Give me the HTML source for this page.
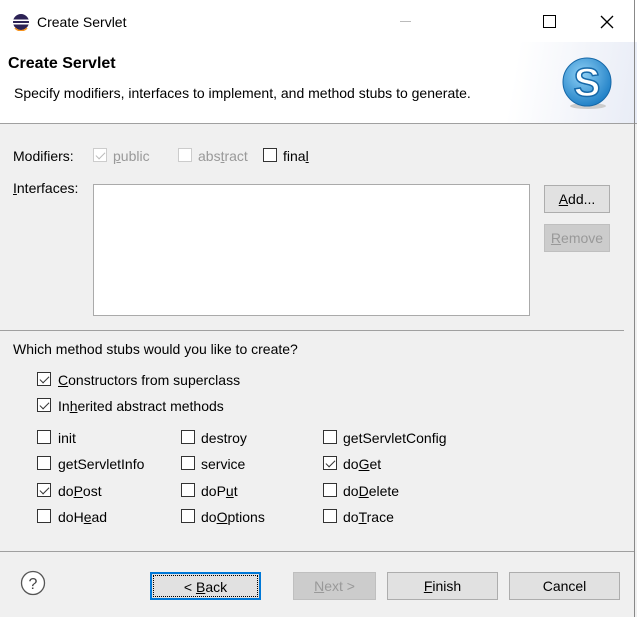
<!DOCTYPE html>
<html><head><style>
*{box-sizing:border-box}
body{margin:0;width:637px;height:617px;overflow:hidden;background:#f0f0f0;font-family:"Liberation Sans",sans-serif;font-size:14px;color:#000;position:relative}
.a{position:absolute;white-space:nowrap}
.cb{position:absolute;width:14px;height:14px;border:1px solid #333;background:#fff}
.cb.k::after{content:"";position:absolute;left:4px;top:1px;width:4px;height:8px;border:solid #333;border-width:0 1.3px 1.3px 0;transform:rotate(45deg)}
.dis{border-color:#ccc}
.dis.k::after{border-color:#bbb}
.btn{position:absolute;height:28px;border:1px solid #adadad;background:#e1e1e1;text-align:center;line-height:26px}
u{text-decoration:underline}
</style></head><body>
<div class="a" style="left:0;top:0;width:637px;height:123px;background:linear-gradient(100deg,#fff 80%,#e8ecf6 100%)"></div>
<div class="a" style="left:0;top:0;width:637px;height:42px;background:#fff"></div>
<div class="a" style="left:0;top:123px;width:637px;height:1px;background:#a0a0a0"></div>
<div class="a" style="left:634px;top:0;width:1px;height:617px;background:#888"></div>
<svg class="a" style="left:12px;top:13px" width="18" height="18"><circle cx="9" cy="9" r="8" fill="#2c2255"/><rect x="1" y="6.5" width="16" height="1.5" fill="#fff"/><rect x="1" y="10" width="16" height="1.5" fill="#fff"/><path d="M3 15 A8 8 0 0 0 15 15" stroke="#f7941e" stroke-width="1.5" fill="none"/></svg>
<div class="a" style="left:37px;top:14px;font-size:14px">Create Servlet</div>
<div class="a" style="left:400px;top:21px;width:11px;height:1px;background:#bbb"></div>
<div class="a" style="left:543px;top:15px;width:13px;height:13px;border:1.3px solid #000"></div>
<svg class="a" style="left:600px;top:15px" width="14" height="14"><path d="M1 1L13 13M13 1L1 13" stroke="#000" stroke-width="1.3"/></svg>
<div class="a" style="left:8px;top:55px;font-size:16px;font-weight:bold">Create Servlet</div>
<div class="a" style="left:14px;top:85px">Specify modifiers, interfaces to implement, and method stubs to generate.</div>
<svg class="a" style="left:560px;top:56px" width="56" height="56"><defs><radialGradient id="g" cx="40%" cy="35%" r="70%"><stop offset="0" stop-color="#8fd0f5"/><stop offset="1" stop-color="#1a7cc4"/></radialGradient></defs><ellipse cx="28" cy="50" rx="18" ry="3" fill="#ccc"/><circle cx="27" cy="26" r="24" fill="url(#g)" stroke="#1668a8"/><text x="27" y="40" text-anchor="middle" font-family="Liberation Sans" font-weight="bold" font-size="40" fill="#fff" stroke="#1668a8" stroke-width="1.5">S</text></svg>

<div class="a" style="left:13px;top:148px">Modifiers:</div>
<div class="cb dis k" style="left:93px;top:148px"></div><div class="a" style="left:113px;top:148px;color:#999"><u>p</u>ublic</div>
<div class="cb dis" style="left:178px;top:148px"></div><div class="a" style="left:198px;top:148px;color:#999">abs<u>t</u>ract</div>
<div class="cb" style="left:263px;top:148px"></div><div class="a" style="left:283px;top:148px">fina<u>l</u></div>
<div class="a" style="left:13px;top:180px"><u>I</u>nterfaces:</div>
<div class="a" style="left:93px;top:184px;width:437px;height:132px;background:#fff;border:1px solid #aaa"></div>
<div class="btn" style="left:544px;top:185px;width:66px"><u>A</u>dd...</div>
<div class="btn" style="left:544px;top:224px;width:66px;color:#999;background:#ccc;border-color:#bfbfbf"><u>R</u>emove</div>
<div class="a" style="left:0;top:330px;width:624px;height:1px;background:#a0a0a0"></div>
<div class="a" style="left:13px;top:341px">Which method stubs would you like to create?</div>
<div class="cb k" style="left:37px;top:372px"></div><div class="a" style="left:58px;top:372px"><u>C</u>onstructors from superclass</div>
<div class="cb k" style="left:37px;top:398px"></div><div class="a" style="left:58px;top:398px">In<u>h</u>erited abstract methods</div>

<div class="cb" style="left:37px;top:430px"></div><div class="a" style="left:58px;top:430px">init</div>
<div class="cb" style="left:181px;top:430px"></div><div class="a" style="left:201px;top:430px">destroy</div>
<div class="cb" style="left:323px;top:430px"></div><div class="a" style="left:343px;top:430px">getServletConfig</div>
<div class="cb" style="left:37px;top:456px"></div><div class="a" style="left:58px;top:456px">getServletInfo</div>
<div class="cb" style="left:181px;top:456px"></div><div class="a" style="left:201px;top:456px">service</div>
<div class="cb k" style="left:323px;top:456px"></div><div class="a" style="left:343px;top:456px">do<u>G</u>et</div>
<div class="cb k" style="left:37px;top:483px"></div><div class="a" style="left:58px;top:483px">do<u>P</u>ost</div>
<div class="cb" style="left:181px;top:483px"></div><div class="a" style="left:201px;top:483px">doP<u>u</u>t</div>
<div class="cb" style="left:323px;top:483px"></div><div class="a" style="left:343px;top:483px">do<u>D</u>elete</div>
<div class="cb" style="left:37px;top:509px"></div><div class="a" style="left:58px;top:509px">doH<u>e</u>ad</div>
<div class="cb" style="left:181px;top:509px"></div><div class="a" style="left:201px;top:509px">do<u>O</u>ptions</div>
<div class="cb" style="left:323px;top:509px"></div><div class="a" style="left:343px;top:509px">do<u>T</u>race</div>

<div class="a" style="left:0;top:551px;width:634px;height:1px;background:#a0a0a0"></div>
<svg class="a" style="left:20px;top:570px" width="26" height="26"><circle cx="13" cy="13" r="11.5" fill="#fff" stroke="#555" stroke-width="1.3"/><text x="13" y="19" text-anchor="middle" font-family="Liberation Sans" font-size="16" fill="#444">?</text></svg>
<div class="btn" style="left:150px;top:572px;width:111px;border:2px solid #0078d7;outline:1px dotted #000;outline-offset:-4px">&lt; <u>B</u>ack</div>
<div class="btn" style="left:293px;top:572px;width:83px;color:#999;background:#ccc;border-color:#bfbfbf"><u>N</u>ext &gt;</div>
<div class="btn" style="left:387px;top:572px;width:111px"><u>F</u>inish</div>
<div class="btn" style="left:509px;top:572px;width:111px">Cancel</div>
</body></html>
